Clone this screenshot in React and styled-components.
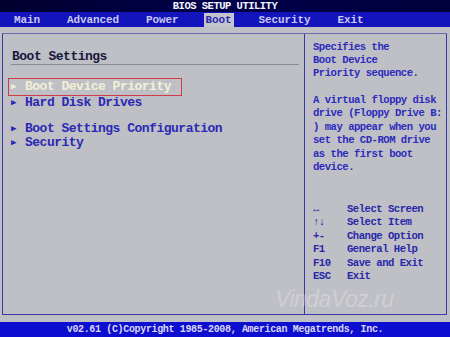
import React from 'react'
import styled, { createGlobalStyle } from 'styled-components'

const GlobalStyle = createGlobalStyle`
  html, body { margin: 0; padding: 0; background: #bfbfc6; }
  * { box-sizing: border-box; }
`

const mono = `"Liberation Mono", "DejaVu Sans Mono", monospace`

const tabs = ['Main', 'Advanced', 'Power', 'Boot', 'Security', 'Exit']

const items = [
  { label: 'Boot Device Priority', selected: true },
  { label: 'Hard Disk Drives' },
  { gap: true },
  { label: 'Boot Settings Configuration' },
  { label: 'Security' },
]

const help = [
  'Specifies the',
  'Boot Device',
  'Priority sequence.',
  '',
  'A virtual floppy disk',
  'drive (Floppy Drive B:',
  ') may appear when you',
  'set the CD-ROM drive',
  'as the first boot',
  'device.',
]

const keys = [
  ['↔', 'Select Screen'],
  ['↑↓', 'Select Item'],
  ['+-', 'Change Option'],
  ['F1', 'General Help'],
  ['F10', 'Save and Exit'],
  ['ESC', 'Exit'],
]

const App = () => {
  return (
    <Screen>
      <GlobalStyle />
      <TitleBar>BIOS SETUP UTILITY</TitleBar>
      <MenuBar>
        {tabs.map(t => (
          <Tab key={t} active={t === 'Boot'}>{t}</Tab>
        ))}
      </MenuBar>
      <Frame>
        <LeftPane>
          <Heading>Boot Settings</Heading>
          <ItemList>
            {items.map((it, i) =>
              it.gap ? <Spacer key={i} /> : (
                <Item key={i} selected={it.selected}>
                  <Arrow selected={it.selected}>▶</Arrow>
                  {it.label}
                </Item>
              )
            )}
          </ItemList>
        </LeftPane>
        <RightPane>
          <HelpText>
            {help.map((l, i) => <Line key={i}>{l || '\u00a0'}</Line>)}
          </HelpText>
          <KeyList>
            {keys.map(([k, d]) => (
              <KeyRow key={k}>
                <KeyName>{k}</KeyName>
                <span>{d}</span>
              </KeyRow>
            ))}
          </KeyList>
        </RightPane>
        <Watermark>VindaVoz.ru</Watermark>
      </Frame>
      <Footer>v02.61 (C)Copyright 1985-2008, American Megatrends, Inc.</Footer>
    </Screen>
  )
}

const Screen = styled.div`
width: 450px;
height: 337px;
display: flex;
flex-direction: column;
background: #bfbfc6;
font-family: ${mono};
font-weight: bold;
overflow: hidden;
`

const TitleBar = styled.div`
height: 12px;
flex: none;
display: flex;
align-items: center;
justify-content: center;
background: linear-gradient(90deg, #00002e, #00004a 50%, #00003a);
color: #f4f4ff;
font-size: 10.5px;
letter-spacing: -0.5px;
line-height: 12px;
`

const MenuBar = styled.div`
height: 15px;
flex: none;
display: flex;
align-items: center;
gap: 23px;
padding-left: 12px;
background: #1414bc;
margin-bottom: 6px;
`

const Tab = styled.div`
padding: 0 2px;
height: 14px;
line-height: 14px;
font-size: 11px;
letter-spacing: -0.1px;
color: ${p => p.active ? '#2a2ab0' : '#c8c8f0'};
background: ${p => p.active ? '#c4c4cc' : 'transparent'};
`

const Frame = styled.div`
position: relative;
height: 282px;
flex: none;
margin: 0 3px 0 2px;
display: flex;
border: 1.5px solid #3a3aa6;
border-top-color: #6a6ab0;
`

const LeftPane = styled.div`
width: 302px;
flex: none;
padding: 16px 0 0 5px;
border-right: 1.5px solid #3a3aa6;
`

const Heading = styled.div`
margin: 0 5px 0 3px;
padding-left: 1px;
height: 14px;
line-height: 14px;
font-size: 13px;
letter-spacing: -0.5px;
color: #18183c;
border-bottom: 1px solid #8a8a9a;
box-sizing: content-box;
`

const ItemList = styled.div`
margin-top: 13px;
display: flex;
flex-direction: column;
align-items: flex-start;
`

const Item = styled.div`
display: flex;
align-items: center;
line-height: 14px;
height: ${p => p.selected ? '18px' : '14px'};
padding: ${p => p.selected ? '1px 10px 1px 2px' : '0 0 0 3px'};
border: ${p => p.selected ? '1px solid #d23a4a' : 'none'};
font-size: 13px;
letter-spacing: -0.5px;
color: ${p => p.selected ? '#f2f0d6' : '#2a2ab4'};
`

const Arrow = styled.span`
width: 14px;
font-size: 9px;
letter-spacing: 0;
color: ${p => p.selected ? '#f2f0d6' : '#2a2ab4'};
`

const Spacer = styled.div`
height: 12px;
`

const RightPane = styled.div`
flex: 1;
padding: 6.5px 0 0 8px;
display: flex;
flex-direction: column;
color: #2c2cbc;
font-size: 10.6px;
letter-spacing: -0.5px;
`

const HelpText = styled.div`
display: flex;
flex-direction: column;
`

const Line = styled.div`
height: 13.4px;
line-height: 13.4px;
white-space: pre;
`

const KeyList = styled.div`
margin-top: 28.6px;
display: flex;
flex-direction: column;
color: #2828a8;
`

const KeyRow = styled.div`
display: flex;
height: 13.4px;
line-height: 13.4px;
`

const KeyName = styled.span`
width: 34px;
flex: none;
`

const Watermark = styled.div`
position: absolute;
left: 272px;
top: 252px;
font-family: "Liberation Sans", sans-serif;
font-style: italic;
font-weight: normal;
font-size: 23px;
letter-spacing: -0.5px;
color: rgba(255, 255, 255, 0.26);
pointer-events: none;
`

const Footer = styled.div`
margin-top: auto;
height: 15px;
flex: none;
display: flex;
align-items: center;
justify-content: center;
background: #0e0ed0;
color: #d8d8f4;
font-size: 10px;
letter-spacing: -0.35px;
`

export default App
